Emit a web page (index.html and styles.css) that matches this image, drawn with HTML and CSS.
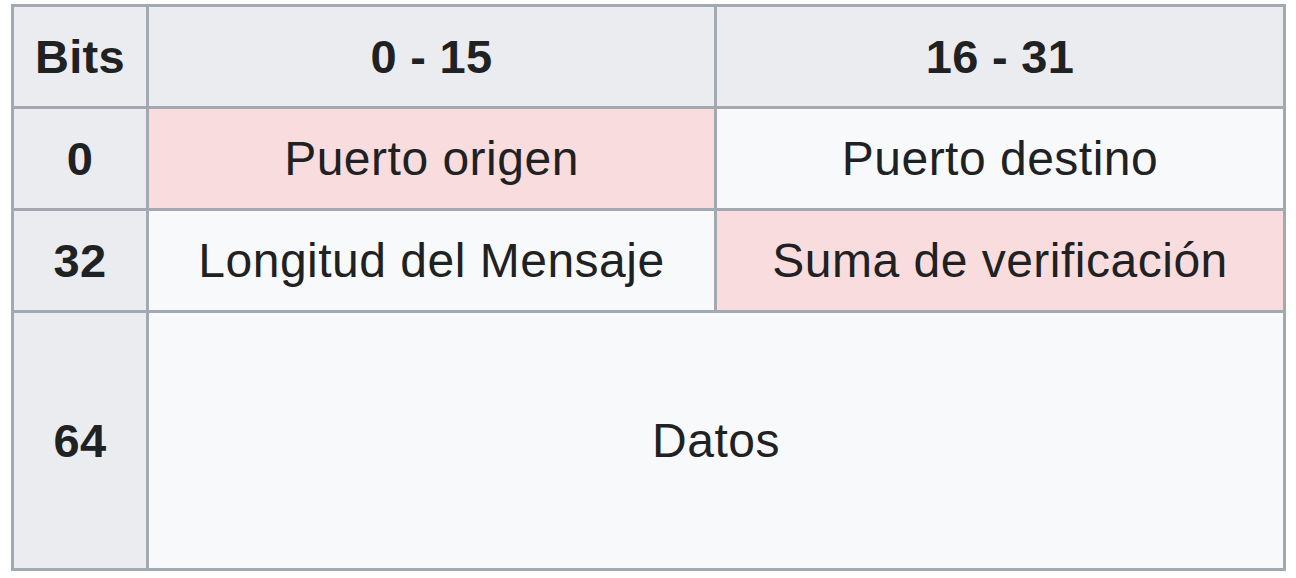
FILE: index.html
```html
<!DOCTYPE html>
<html lang="es">
<head>
<meta charset="utf-8">
<link rel="stylesheet" href="styles.css">
</head>
<body>
<div class="wrap">
<table class="wikitable">
  <colgroup>
    <col class="c-bits">
    <col class="c-a">
    <col class="c-b">
  </colgroup>
  <tr class="r-head">
    <th>Bits</th>
    <th>0 - 15</th>
    <th>16 - 31</th>
  </tr>
  <tr class="r-row">
    <th>0</th>
    <td class="pink">Puerto origen</td>
    <td>Puerto destino</td>
  </tr>
  <tr class="r-row">
    <th>32</th>
    <td>Longitud del Mensaje</td>
    <td class="pink">Suma de verificación</td>
  </tr>
  <tr class="r-data">
    <th>64</th>
    <td colspan="2">Datos</td>
  </tr>
</table>
</div>
</body>
</html>
```
FILE: styles.css
```css
html, body {
  margin: 0;
  padding: 0;
  background: #ffffff;
}
.wrap {
  padding: 4px 11px;
}
.wikitable {
  border-collapse: collapse;
  table-layout: fixed;
  width: 1272px;
  border: 3px solid #a2a9b1;
  font-family: "Liberation Sans", Arial, sans-serif;
  font-size: 47px;
  color: #202122;
  background: #f8f9fa;
}
.c-bits { width: 135px; }
.c-a { width: 568px; }
.c-b { width: 569px; }
.wikitable th,
.wikitable td {
  border: 3px solid #a2a9b1;
  padding: 0;
  text-align: center;
  vertical-align: middle;
  line-height: 1;
}
.wikitable th {
  background: #eaecf0;
  font-weight: bold;
  letter-spacing: 0.3px;
}
.wikitable td {
  font-weight: normal;
  font-size: 48px;
  letter-spacing: 0.5px;
}
.wikitable td.pink {
  background: #f9dcdd;
}
.r-head, .r-row { height: 102px; }
.r-data { height: 258px; }
```
